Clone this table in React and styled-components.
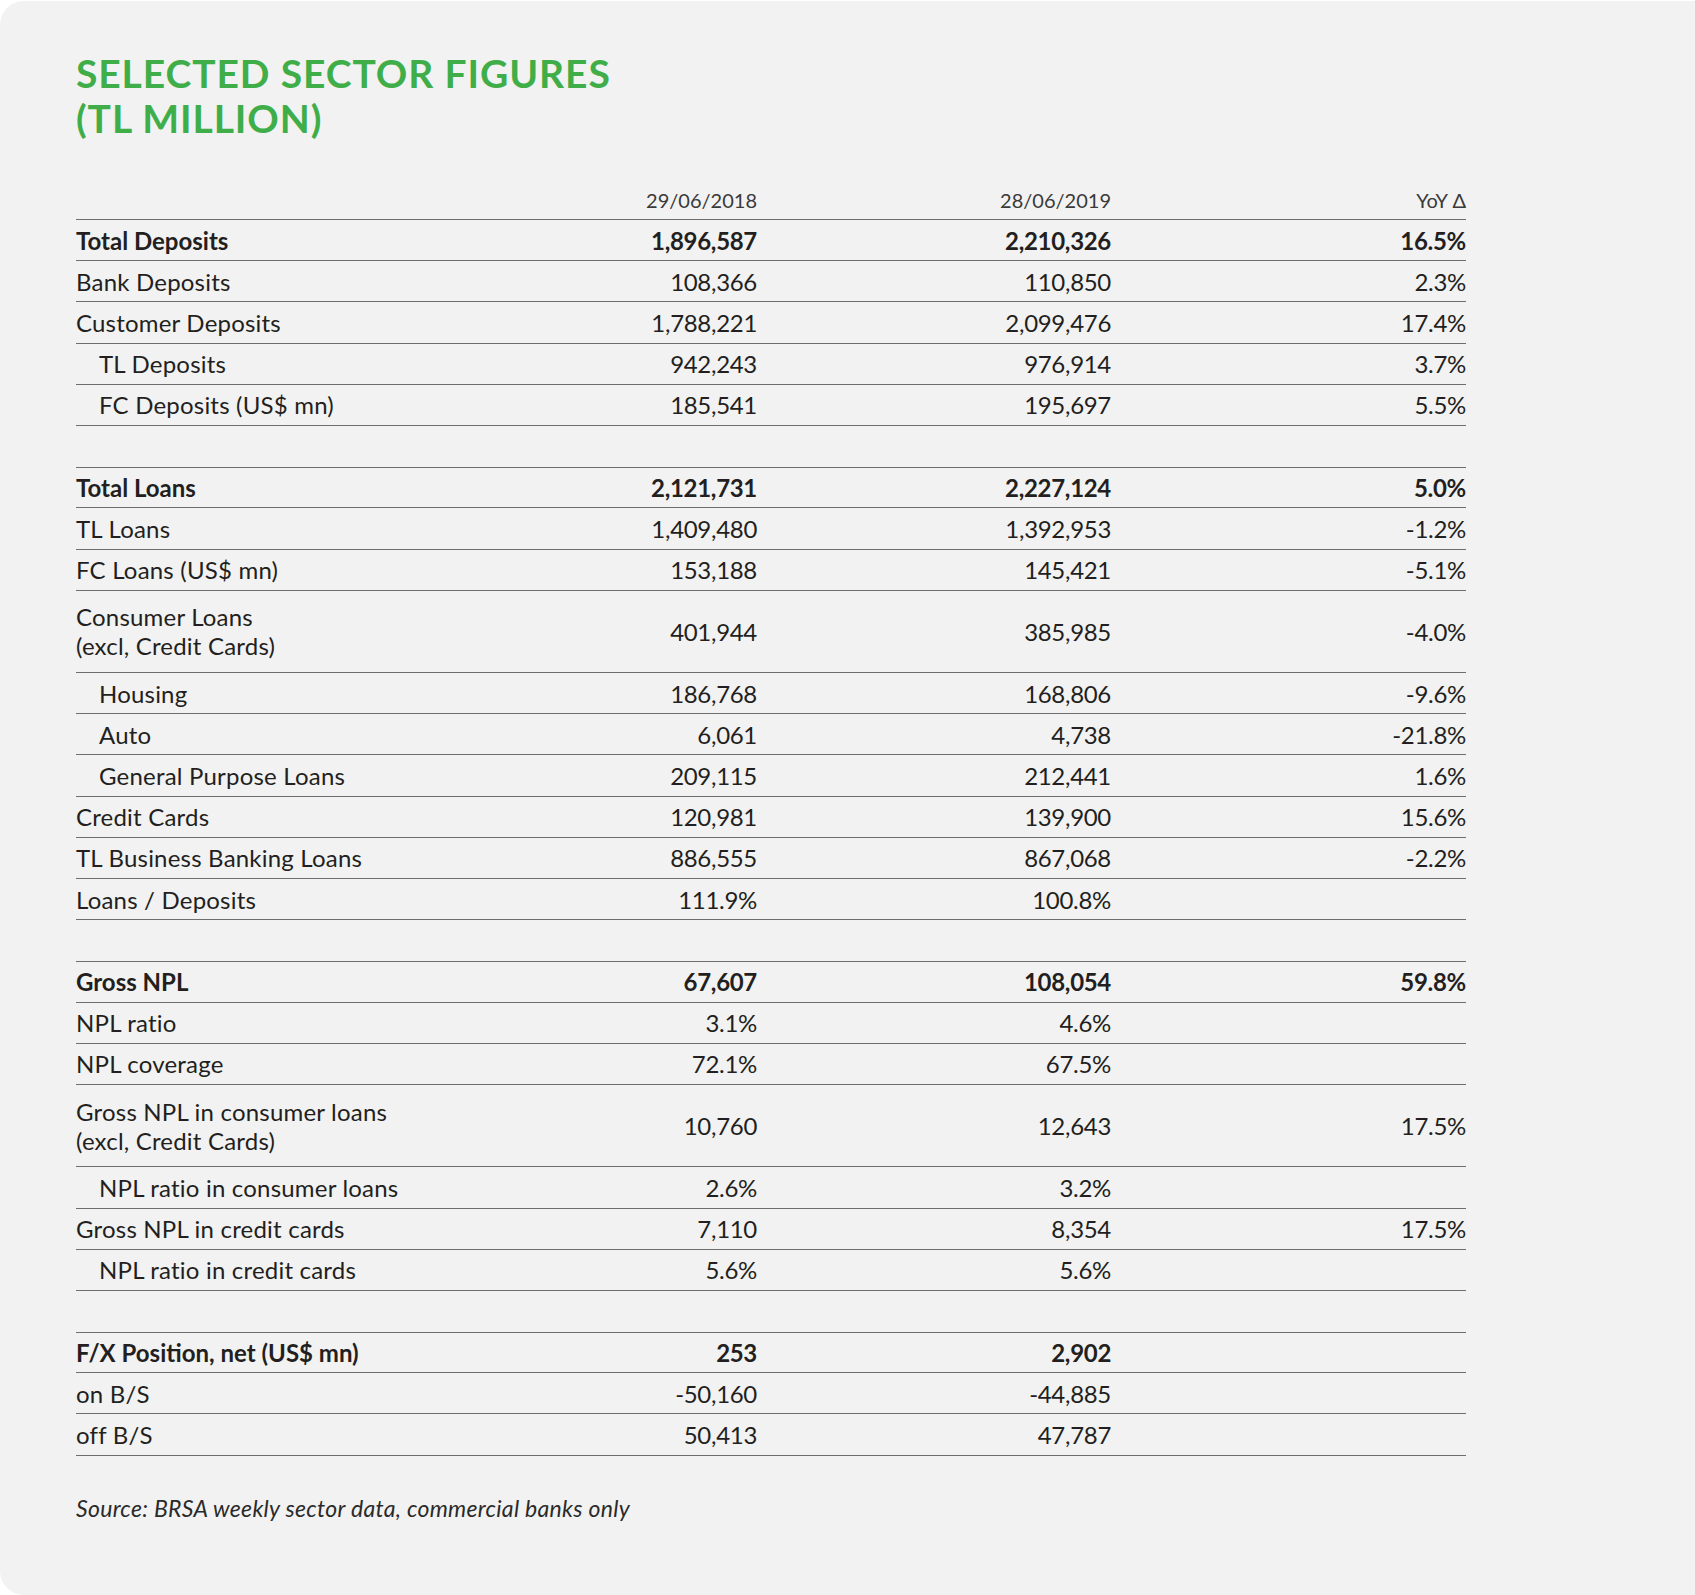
import styled, { createGlobalStyle } from 'styled-components'

const GlobalStyle = createGlobalStyle`
  html, body {
    margin: 0;
    padding: 0;
    background: #ffffff;
  }
  body {
    font-family: Lato, "Open Sans", sans-serif;
    color: #231f20;
  }
`

const Panel = styled.div`
  box-sizing: border-box;
  margin-top: 1px;
  width: 1695px;
  min-height: 1594px;
  background-color: #f2f2f2;
  border-radius: 24px 0 0 24px;
  padding: 50px 229px 0 76px;
`

const Title = styled.h1`
  margin: 0;
  font-family: Lato, sans-serif;
  font-weight: 700;
  font-size: 39px;
  line-height: 45px;
  letter-spacing: 0.9px;
  color: #3fae49;
`

const Table = styled.div`
  margin-top: 39px;
  width: 1390px;
`

const Grid = styled.div`
  display: grid;
  grid-template-columns: 481px 200px 354px 355px;
  align-items: center;
  box-sizing: border-box;
  height: ${p => (p.$double ? '82.4px' : '41.2px')};
  border-bottom: 1px solid #6e6e6e;
  border-top: ${p => (p.$first ? '1px solid #6e6e6e' : 'none')};
`

const HeadRow = styled(Grid)`
  height: 40px;
`

const Label = styled.div`
  font-size: 24px;
  line-height: 29px;
  font-weight: ${p => (p.$bold ? 700 : 400)};
  letter-spacing: ${p => (p.$bold ? '0' : '0.2px')};
  padding-left: ${p => (p.$indent ? '23px' : '0')};
`

const Num = styled.div`
  text-align: right;
  font-size: ${p => (p.$head ? '20px' : '24px')};
  font-weight: ${p => (p.$bold ? 700 : 400)};
  color: ${p => (p.$head ? '#3a3a3a' : 'inherit')};
  letter-spacing: ${p => (p.$head ? '0' : '-0.3px')};
`

const Group = styled.div`
  margin-top: ${p => (p.$first ? '0' : '41.2px')};
`

const Source = styled.p`
  margin: 38px 0 0;
  font-size: 23px;
  font-style: italic;
  font-weight: 400;
  letter-spacing: 0.3px;
  color: #2a2a2a;
`

const groups = [
  [
    { l: 'Total Deposits', a: '1,896,587', b: '2,210,326', c: '16.5%', bold: true },
    { l: 'Bank Deposits', a: '108,366', b: '110,850', c: '2.3%' },
    { l: 'Customer Deposits', a: '1,788,221', b: '2,099,476', c: '17.4%' },
    { l: 'TL Deposits', a: '942,243', b: '976,914', c: '3.7%', indent: true },
    { l: 'FC Deposits (US$ mn)', a: '185,541', b: '195,697', c: '5.5%', indent: true },
  ],
  [
    { l: 'Total Loans', a: '2,121,731', b: '2,227,124', c: '5.0%', bold: true },
    { l: 'TL Loans', a: '1,409,480', b: '1,392,953', c: '-1.2%' },
    { l: 'FC Loans (US$ mn)', a: '153,188', b: '145,421', c: '-5.1%' },
    { l: ['Consumer Loans', '(excl, Credit Cards)'], a: '401,944', b: '385,985', c: '-4.0%' },
    { l: 'Housing', a: '186,768', b: '168,806', c: '-9.6%', indent: true },
    { l: 'Auto', a: '6,061', b: '4,738', c: '-21.8%', indent: true },
    { l: 'General Purpose Loans', a: '209,115', b: '212,441', c: '1.6%', indent: true },
    { l: 'Credit Cards', a: '120,981', b: '139,900', c: '15.6%' },
    { l: 'TL Business Banking Loans', a: '886,555', b: '867,068', c: '-2.2%' },
    { l: 'Loans / Deposits', a: '111.9%', b: '100.8%', c: '' },
  ],
  [
    { l: 'Gross NPL', a: '67,607', b: '108,054', c: '59.8%', bold: true },
    { l: 'NPL ratio', a: '3.1%', b: '4.6%', c: '' },
    { l: 'NPL coverage', a: '72.1%', b: '67.5%', c: '' },
    { l: ['Gross NPL in consumer loans', '(excl, Credit Cards)'], a: '10,760', b: '12,643', c: '17.5%' },
    { l: 'NPL ratio in consumer loans', a: '2.6%', b: '3.2%', c: '', indent: true },
    { l: 'Gross NPL in credit cards', a: '7,110', b: '8,354', c: '17.5%' },
    { l: 'NPL ratio in credit cards', a: '5.6%', b: '5.6%', c: '', indent: true },
  ],
  [
    { l: 'F/X Position, net (US$ mn)', a: '253', b: '2,902', c: '', bold: true },
    { l: 'on B/S', a: '-50,160', b: '-44,885', c: '' },
    { l: 'off B/S', a: '50,413', b: '47,787', c: '' },
  ],
]

const App = () => {
  return (
    <>
      <GlobalStyle />
      <Panel>
        <Title>
          SELECTED SECTOR FIGURES
          <br />
          (TL MILLION)
        </Title>
        <Table>
          <HeadRow>
            <div />
            <Num $head>29/06/2018</Num>
            <Num $head>28/06/2019</Num>
            <Num $head>YoY Δ</Num>
          </HeadRow>
          {groups.map((rows, gi) => (
            <Group key={gi} $first={gi === 0}>
              {rows.map((r, ri) => {
                const double = Array.isArray(r.l)
                return (
                  <Grid key={ri} $double={double} $first={gi > 0 && ri === 0}>
                    <Label $bold={r.bold} $indent={r.indent}>
                      {double ? (
                        <>
                          {r.l[0]}
                          <br />
                          {r.l[1]}
                        </>
                      ) : (
                        r.l
                      )}
                    </Label>
                    <Num $bold={r.bold}>{r.a}</Num>
                    <Num $bold={r.bold}>{r.b}</Num>
                    <Num $bold={r.bold}>{r.c}</Num>
                  </Grid>
                )
              })}
            </Group>
          ))}
        </Table>
        <Source>Source: BRSA weekly sector data, commercial banks only</Source>
      </Panel>
    </>
  )
}

export default App
